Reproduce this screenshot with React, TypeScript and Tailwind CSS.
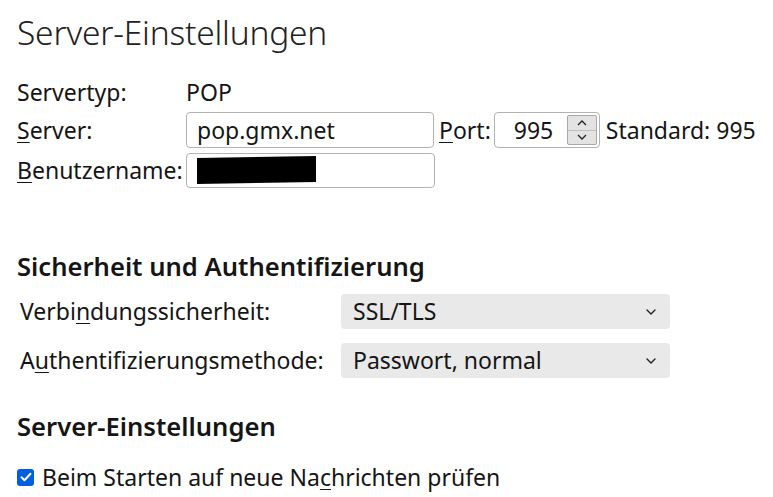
import React from "react";

const font = { fontFamily: '"Noto Sans", "Open Sans", sans-serif' };

function U({ children }: { children: React.ReactNode }) {
  return <span className="underline underline-offset-[3px] decoration-1">{children}</span>;
}

function Chevron() {
  return (
    <svg width="10" height="6" viewBox="0 0 10 6" className="text-[#222]">
      <path d="M1 1l4 4 4-4" fill="none" stroke="currentColor" strokeWidth="1.4" strokeLinecap="round" strokeLinejoin="round" />
    </svg>
  );
}

export default function App() {
  return (
    <div
      className="w-[773px] h-[497px] overflow-hidden bg-white text-[#151515] pl-[17px] pt-[8px]"
      style={font}
    >
      <h1 className="text-[33.5px] font-light leading-[48px] tracking-[-0.2px] text-[#222]">Server-Einstellungen</h1>

      <div className="mt-[21px] text-[23px] leading-[30px]">
        <div className="flex items-center h-[30px]">
          <div className="w-[169px]">Servertyp:</div>
          <div>POP</div>
        </div>
        <div className="flex items-center mt-[5px] h-[36px]">
          <div className="w-[169px]"><U>S</U>erver:</div>
          <div className="w-[248px] h-[36px] border border-[#b3b3b3] rounded-[4px] px-[10px] flex items-center">pop.gmx.net</div>
          <div className="ml-[5px] mr-[3px]"><U>P</U>ort:</div>
          <div className="w-[106px] h-[36px] border border-[#b3b3b3] rounded-[4px] flex items-center pl-[19px] pr-[2px]">
            <span className="flex-1">995</span>
            <div className="w-[30px] h-[30px] border border-[#a8a8a8] bg-[#e3e3e3] rounded-[2px] flex flex-col">
              <div className="flex-1 flex items-center justify-center border-b border-[#bdbdbd]">
                <svg width="10" height="6" viewBox="0 0 10 6"><path d="M1 5l4-4 4 4" fill="none" stroke="#222" strokeWidth="1.3" /></svg>
              </div>
              <div className="flex-1 flex items-center justify-center">
                <svg width="10" height="6" viewBox="0 0 10 6"><path d="M1 1l4 4 4-4" fill="none" stroke="#222" strokeWidth="1.3" /></svg>
              </div>
            </div>
          </div>
          <div className="ml-[6px]">Standard:&nbsp;995</div>
        </div>
        <div className="flex items-center mt-[4px] h-[36px]">
          <div className="w-[169px]"><U>B</U>enutzername:</div>
          <div className="w-[249px] h-[35px] border border-[#b3b3b3] rounded-[4px] px-[10px] flex items-center">
            <div className="w-[119px] h-[26px] bg-black -skew-y-1"></div>
          </div>
        </div>
      </div>

      <h2 className="mt-[62px] text-[25.6px] font-semibold leading-[34px]">Sicherheit und Authentifizierung</h2>

      <div className="mt-[10px] text-[23px] pl-[3px]">
        <div className="flex items-center h-[35px]">
          <div className="w-[321px]">Verbi<U>n</U>dungssicherheit:</div>
          <div className="w-[329px] h-[35px] rounded-[4px] bg-[#e9e9e9] flex items-center pl-[12px] pr-[14px]">
            <span className="flex-1">SSL/TLS</span>
            <Chevron />
          </div>
        </div>
        <div className="flex items-center h-[35px] mt-[14px]">
          <div className="w-[321px]">A<U>u</U>thentifizierungsmethode:</div>
          <div className="w-[329px] h-[35px] rounded-[4px] bg-[#e9e9e9] flex items-center pl-[12px] pr-[14px]">
            <span className="flex-1">Passwort, normal</span>
            <Chevron />
          </div>
        </div>
      </div>

      <h2 className="mt-[32px] text-[25.6px] font-semibold leading-[34px]">Server-Einstellungen</h2>

      <div className="mt-[18px] flex items-center text-[23px] h-[30px]">
        <div className="w-[17px] h-[17px] rounded-[3px] bg-[#0060df] flex items-center justify-center">
          <svg width="12" height="10" viewBox="0 0 12 10"><path d="M1.5 5.2l3 3 6-6.5" fill="none" stroke="white" strokeWidth="2" strokeLinecap="round" strokeLinejoin="round" /></svg>
        </div>
        <div className="ml-[8px]">Beim Starten auf neue Na<U>c</U>hrichten prüfen</div>
      </div>
    </div>
  );
}
